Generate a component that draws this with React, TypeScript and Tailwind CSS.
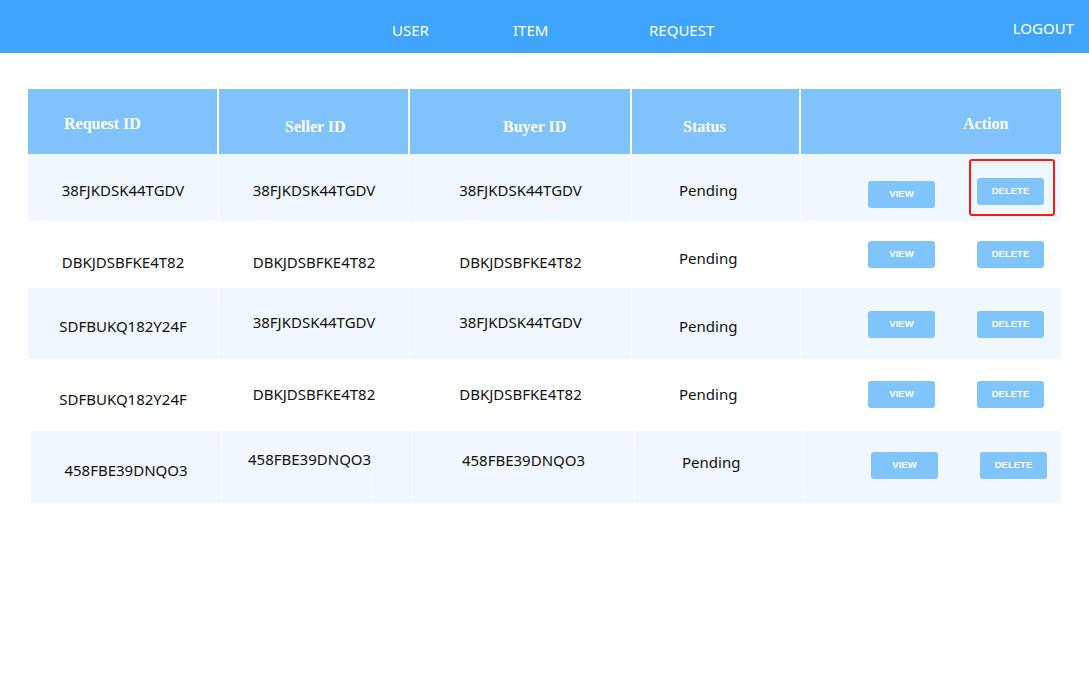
import React from 'react';

type Row = {
  cells: [string, string, string, string];
  pads: [number, number, number, number];
  viewPt: number;
  deletePt: number;
  striped: boolean;
  shift?: boolean;
  highlight?: boolean;
  extraLine?: boolean;
};

const rows: Row[] = [
  {
    cells: ['38FJKDSK44TGDV', '38FJKDSK44TGDV', '38FJKDSK44TGDV', 'Pending'],
    pads: [25, 25, 25, 25],
    viewPt: 27,
    deletePt: 24,
    striped: true,
    highlight: true,
  },
  {
    cells: ['DBKJDSBFKE4T82', 'DBKJDSBFKE4T82', 'DBKJDSBFKE4T82', 'Pending'],
    pads: [30, 30, 30, 26],
    viewPt: 20,
    deletePt: 20,
    striped: false,
  },
  {
    cells: ['SDFBUKQ182Y24F', '38FJKDSK44TGDV', '38FJKDSK44TGDV', 'Pending'],
    pads: [27, 23, 23, 27],
    viewPt: 23,
    deletePt: 23,
    striped: true,
  },
  {
    cells: ['SDFBUKQ182Y24F', 'DBKJDSBFKE4T82', 'DBKJDSBFKE4T82', 'Pending'],
    pads: [29, 24, 24, 24],
    viewPt: 22,
    deletePt: 22,
    striped: false,
  },
  {
    cells: ['458FBE39DNQO3', '458FBE39DNQO3', '458FBE39DNQO3', 'Pending'],
    pads: [28, 17, 18, 20],
    viewPt: 21,
    deletePt: 21,
    striped: true,
    shift: true,
    extraLine: true,
  },
];

const heights = [67, 67, 71, 72, 72];

const headers = [
  { label: 'Request ID', pl: 36, pt: 23 },
  { label: 'Seller ID', pl: 66, pt: 26 },
  { label: 'Buyer ID', pl: 93, pt: 26 },
  { label: 'Status', pl: 51, pt: 26 },
  { label: 'Action', pl: 162, pt: 23 },
];

const gridCols = 'grid grid-cols-[191px_191px_222px_169px_260px]';

function ActionButton({ label }: { label: string }) {
  return (
    <button className="w-[67px] h-[27px] rounded-[3px] bg-[#80c4fc] text-white text-[9.5px] font-bold font-['Liberation_Sans',Arial,sans-serif] flex items-center justify-center">
      {label}
    </button>
  );
}

export default function App() {
  return (
    <div className="min-h-[679px] bg-white font-['Noto_Sans',sans-serif]">
      {/* Barre de navigation */}
      <nav className="h-[53px] bg-[#3ea4fc] flex text-white text-[15px]">
        <div className="flex pl-[392px] pt-[19px]">
          <span className="w-[121px]">USER</span>
          <span className="w-[136px]">ITEM</span>
          <span>REQUEST</span>
        </div>
        <span className="ml-auto pr-[15px] pt-[17px]">LOGOUT</span>
      </nav>

      <div className="pt-[36px] pl-[28px]">
        <div className="w-[1033px]">
          <div className={`${gridCols} h-[65px] bg-[#80c3fc]`}>
            {headers.map((h, i) => (
              <div
                key={h.label}
                style={{ paddingLeft: h.pl, paddingTop: h.pt }}
                className={`text-white text-[16px] font-bold font-['Liberation_Serif',Georgia,serif] ${
                  i < headers.length - 1 ? 'border-r-2 border-white' : ''
                }`}
              >
                {h.label}
              </div>
            ))}
          </div>

          {rows.map((row, r) => (
            <div
              key={r}
              style={{ height: heights[r] }}
              className={`${gridCols} text-[15px] text-[#111] ${row.striped ? 'bg-[#f0f7fe]' : 'bg-white'} ${
                row.shift ? 'ml-[3px]' : ''
              }`}
            >
              <div style={{ paddingTop: row.pads[0] }} className="text-center border-r border-white">
                {row.cells[0]}
              </div>
              <div style={{ paddingTop: row.pads[1] }} className="border-r border-white">
                {row.extraLine ? (
                  <div className="w-[150px] h-full border-r border-white pl-[26px] whitespace-nowrap">
                    {row.cells[1]}
                  </div>
                ) : (
                  <div className="text-center">{row.cells[1]}</div>
                )}
              </div>
              <div style={{ paddingTop: row.pads[2] }} className="text-center border-r border-white">
                {row.cells[2]}
              </div>
              <div style={{ paddingTop: row.pads[3] }} className="pl-[47px] border-r border-white">
                {row.cells[3]}
              </div>
              <div className="relative flex pl-[67px] gap-[42px]">
                <div style={{ paddingTop: row.viewPt }}>
                  <ActionButton label="VIEW" />
                </div>
                <div style={{ paddingTop: row.deletePt }}>
                  <ActionButton label="DELETE" />
                </div>
                {row.highlight && (
                  <div className="absolute left-[168px] top-[5px] w-[86px] h-[57px] border-2 border-[#ff1a1a] rounded-[3px]" />
                )}
              </div>
            </div>
          ))}
        </div>
      </div>
    </div>
  );
}
